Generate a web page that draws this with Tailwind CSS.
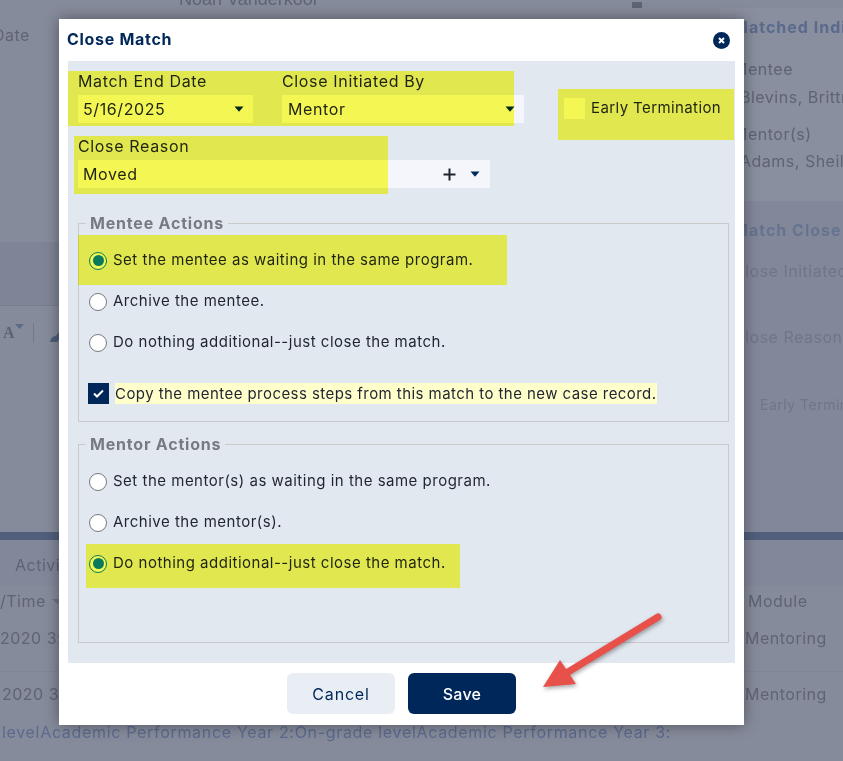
<!DOCTYPE html>
<html lang="en">
<head>
<meta charset="utf-8">
<title>Close Match</title>
<meta name="viewport" content="width=device-width, initial-scale=1">
<script src="https://cdn.jsdelivr.net/npm/@tailwindcss/browser@4"></script>
</head>
<body class="m-0">
<div class="relative w-[843px] h-[761px] overflow-hidden bg-[#868b9b] font-['Inter',sans-serif] text-[#5f6475]">

  <!-- page behind the modal -->
  <div class="flex h-[532px]">
    <div class="w-[720px] shrink-0 flex flex-col">
      <div class="flex h-[8px] items-end pl-[179px] pr-[78px] justify-between text-[18px] leading-[18px] font-['Liberation_Sans',sans-serif]">
        <span class="whitespace-nowrap">Noah Vanderkoor</span>
        <span class="w-[10px] h-[6px] bg-[#5f6475]"></span>
      </div>
      <div class="h-[62px] pt-[18px] -ml-[7px] text-[16px] leading-[18px] tracking-[0.5px]">Date</div>
      <div class="h-[172px]"></div>
      <div class="h-[64px] bg-[#7f8596] border-b border-[#787e8f]"></div>
      <div class="flex items-center h-[52px] pl-[3px] pt-[2px]">
        <span class="font-bold text-[16px] font-['Liberation_Serif',serif] text-[#5c6273]">A</span>
        <svg class="w-[9px] h-[5px] -mt-[14px]" viewBox="0 0 9 5"><path d="M0 0h9L4.500 5z" fill="#5c6a8a"/></svg>
        <span class="ml-[9px] w-px h-[20px] bg-[#737889]"></span>
        <svg class="ml-[16px] w-[12px] h-[11px] mt-[6px]" viewBox="0 0 12 11"><path d="M0 11C1 6 4 5 6 5L9 1l3 2-3 4c0 2-1 4-3 4z" fill="#4f5d7c"/></svg>
      </div>
    </div>
    <div class="flex-1 min-w-0 pt-[8px] overflow-hidden">
      <div class="h-[193px] bg-[#8a8f9f] pl-[13px] pt-[9px] text-[16px] leading-[20px] tracking-[0.5px] whitespace-nowrap">
        <div class="font-bold tracking-[1px] text-[#5a6a8c]">Matched Individuals</div>
        <div class="mt-[22px]">Mentee</div>
        <div class="mt-[8px] ml-[7px]">Blevins, Brittney</div>
        <div class="mt-[17px]">Mentor(s)</div>
        <div class="mt-[7px] ml-[7px]">Adams, Sheila</div>
      </div>
      <div class="pl-[13px] bg-[#82879a] h-[331px] text-[16px] leading-[20px] tracking-[0.5px] text-[#70758a] whitespace-nowrap">
        <div class="pt-[19px] font-bold tracking-[1px] text-[#66738f]">Match Close Info</div>
        <div class="mt-[21px]">Close Initiated By</div>
        <div class="mt-[46px]">Close Reason</div>
        <div class="mt-[48px] ml-[27px] text-[14px]">Early Termination</div>
      </div>
    </div>
  </div>
  <div class="h-[8px] bg-[#515f7d]"></div>
  <div class="h-[46px] pl-[15px] pt-[15px] text-[16px] leading-[20px] tracking-[0.5px] bg-[#82879a]">Activity</div>
  <div class="flex justify-between h-[30px] items-center text-[16px] tracking-[0.5px]">
    <span class="flex items-center gap-[6px] whitespace-nowrap">/Time <svg class="w-[10px] h-[5px]" viewBox="0 0 10 5"><path d="M0 0h10L5 5z" fill="#6f7486"/></svg></span>
    <span class="w-[98px] pl-[3px]">Module</span>
  </div>
  <div class="flex justify-between h-[56px] items-start pt-[12px] text-[16px] leading-[20px] tracking-[0.5px] border-b border-[#80859a]"><span>2020 3:45 PM</span><span class="w-[98px]">Mentoring</span></div>
  <div class="flex justify-between h-[50px] items-start pt-[12px] pl-[2px] text-[16px] leading-[20px] tracking-[0.5px]"><span>2020 3:45 PM</span><span class="w-[98px]">Mentoring</span></div>
  <div class="pl-[2px] text-[16px] leading-[20px] text-[#5b6a8d] whitespace-nowrap tracking-[0.68px]">levelAcademic Performance Year 2:On-grade levelAcademic Performance Year 3:</div>

  <!-- modal -->
  <div class="absolute left-[59px] top-[19px] w-[685px] h-[706px] bg-white shadow-[0_0_14px_rgba(0,0,0,0.4)] text-[#1f2430]">
    <div class="flex items-center justify-between h-[42px] pl-[8px] pr-[14px]">
      <h2 class="text-[16px] font-bold tracking-[0.7px] -mt-[2px] text-[#00275a]">Close Match</h2>
      <button class="w-[17px] h-[17px] rounded-full bg-[#00275a] flex items-center justify-center">
        <svg class="w-[7px] h-[7px]" viewBox="0 0 7 7"><path d="M1 1l5 5M6 1L1 6" stroke="#fff" stroke-width="2"/></svg>
      </button>
    </div>

    <div class="ml-[9px] w-[667px] h-[602px] bg-[#e1e8f0] pt-[10px] pl-[10px]">
      <div class="flex">
        <div class="w-[175px]">
          <div class="h-[24px] text-[16px] leading-[20px] tracking-[0.65px]">Match End Date</div>
          <div class="flex items-center justify-between h-[28px] pl-[5px] pr-[9px] bg-[#f4f6fb] text-[16px] tracking-[0.6px]">
            <span>5/16/2025</span>
            <svg class="w-[10px] h-[6px]" viewBox="0 0 10 6"><path d="M0.500 0.500h9L5 5.700z" fill="#00275a"/></svg>
          </div>
        </div>
        <div class="w-[242px] ml-[29px]">
          <div class="h-[24px] text-[16px] leading-[20px] tracking-[0.65px]">Close Initiated By</div>
          <div class="flex items-center justify-between h-[28px] pl-[6px] pr-[9px] bg-[#f4f6fb] text-[16px] tracking-[0.6px]">
            <span>Mentor</span>
            <svg class="w-[10px] h-[6px]" viewBox="0 0 10 6"><path d="M0.500 0.500h9L5 5.700z" fill="#00275a"/></svg>
          </div>
        </div>
        <div class="flex items-start ml-[40px] mt-[27px]">
          <span class="w-[21px] h-[21px] bg-[#f4f6fb]"></span>
          <span class="ml-[6px] text-[15px] leading-[20px] tracking-[0.4px]">Early Termination</span>
        </div>
      </div>

      <div class="mt-[13px] w-[412px]">
        <div class="h-[24px] text-[16px] leading-[20px] tracking-[0.65px]">Close Reason</div>
        <div class="flex items-center h-[28px] pl-[5px] pr-[10px] bg-[#f4f6fb] text-[16px] tracking-[0.6px]">
          <span>Moved</span>
          <svg class="w-[13px] h-[13px] ml-auto mr-[14px]" viewBox="0 0 13 13"><path d="M6.500 0.500v12M0.500 6.500h12" stroke="#1f2430" stroke-width="2"/></svg>
          <svg class="w-[10px] h-[6px]" viewBox="0 0 10 6"><path d="M0.500 0.500h9L5 5.700z" fill="#00275a"/></svg>
        </div>
      </div>

      <fieldset class="mt-[24px] mr-[6px] h-[210px] border border-[#c9cac9] pt-[6px]">
        <legend class="ml-[7px] px-[4px] h-[22px] text-[16px] leading-[22px] font-bold tracking-[0.8px] text-[#777b80]">Mentee Actions</legend>
        <label class="flex items-center h-[41px] pl-[10px]">
          <span class="relative z-10 flex items-center justify-center w-[18px] h-[18px] rounded-full border-[1.5px] border-[#0b7a5c] bg-[#f4f853]"><span class="w-[11px] h-[11px] rounded-full bg-[#0b7a5c]"></span></span>
          <span class="ml-[6px] text-[15px] tracking-[0.5px]">Set the mentee as waiting in the same program.</span>
        </label>
        <label class="flex items-center h-[41px] pl-[10px]">
          <span class="w-[18px] h-[18px] rounded-full border-[1.5px] border-[#777b80] bg-white"></span>
          <span class="ml-[6px] text-[15px] tracking-[0.5px]">Archive the mentee.</span>
        </label>
        <label class="flex items-center h-[41px] pl-[10px]">
          <span class="w-[18px] h-[18px] rounded-full border-[1.5px] border-[#777b80] bg-white"></span>
          <span class="ml-[6px] text-[15px] tracking-[0.5px]">Do nothing additional--just close the match.</span>
        </label>
        <div class="flex items-center mt-[20px] pl-[9px]">
          <span class="flex items-center justify-center w-[21px] h-[21px] bg-[#00275a]">
            <svg class="w-[11px] h-[9px]" viewBox="0 0 11 9"><path d="M1 4.500l3 3 6-6" fill="none" stroke="#fff" stroke-width="2"/></svg>
          </span>
          <span class="ml-[6px] h-[21px] leading-[21px] bg-[#ffffcc] text-[15px] tracking-[0.44px] whitespace-nowrap">Copy the mentee process steps from this match to the new case record.</span>
        </div>
      </fieldset>

      <fieldset class="mt-[11px] mr-[6px] h-[210px] border border-[#c9cac9] pt-[6px]">
        <legend class="ml-[7px] px-[4px] h-[22px] text-[16px] leading-[22px] font-bold tracking-[0.8px] text-[#777b80]">Mentor Actions</legend>
        <label class="flex items-center h-[41px] pl-[10px]">
          <span class="w-[18px] h-[18px] rounded-full border-[1.5px] border-[#777b80] bg-white"></span>
          <span class="ml-[6px] text-[15px] tracking-[0.5px]">Set the mentor(s) as waiting in the same program.</span>
        </label>
        <label class="flex items-center h-[41px] pl-[10px]">
          <span class="w-[18px] h-[18px] rounded-full border-[1.5px] border-[#777b80] bg-white"></span>
          <span class="ml-[6px] text-[15px] tracking-[0.5px]">Archive the mentor(s).</span>
        </label>
        <label class="flex items-center h-[41px] pl-[10px]">
          <span class="relative z-10 flex items-center justify-center w-[18px] h-[18px] rounded-full border-[1.5px] border-[#0b7a5c] bg-[#f4f853]"><span class="w-[11px] h-[11px] rounded-full bg-[#0b7a5c]"></span></span>
          <span class="ml-[6px] text-[15px] tracking-[0.5px]">Do nothing additional--just close the match.</span>
        </label>
      </fieldset>
    </div>

    <div class="flex justify-center gap-[13px] pt-[10px]">
      <button class="w-[108px] h-[41px] rounded-md bg-[#e9eef4] text-[16px] tracking-[0.8px] text-[#00275a]">Cancel</button>
      <button class="w-[108px] h-[41px] rounded-md bg-[#00275a] text-[16px] font-medium tracking-[0.3px] text-white">Save</button>
    </div>

    <!-- yellow marker highlights laid over the form -->
    <div class="absolute left-[9px] top-[52px] w-[446px] h-[55px] bg-[#ffff54] mix-blend-multiply"></div>
    <div class="absolute left-[499px] top-[70px] w-[176px] h-[51px] bg-[#ffff54] mix-blend-multiply"></div>
    <div class="absolute left-[15px] top-[117px] w-[314px] h-[58px] bg-[#ffff54] mix-blend-multiply"></div>
    <div class="absolute left-[19px] top-[216px] w-[429px] h-[50px] bg-[#ffff54] mix-blend-multiply"></div>
    <div class="absolute left-[27px] top-[525px] w-[374px] h-[44px] bg-[#ffff54] mix-blend-multiply"></div>
  </div>

  <!-- red annotation arrow -->
  <svg class="absolute left-[530px] top-[600px] w-[140px] h-[100px] drop-shadow-[1px_2px_2px_rgba(0,0,0,0.35)]" viewBox="0 0 140 100">
    <path d="M128 17L38 72" stroke="#e8504a" stroke-width="7" stroke-linecap="round"/>
    <path d="M13 87L30 60L46 84z" fill="#e8504a"/>
  </svg>
</div>
</body>
</html>
